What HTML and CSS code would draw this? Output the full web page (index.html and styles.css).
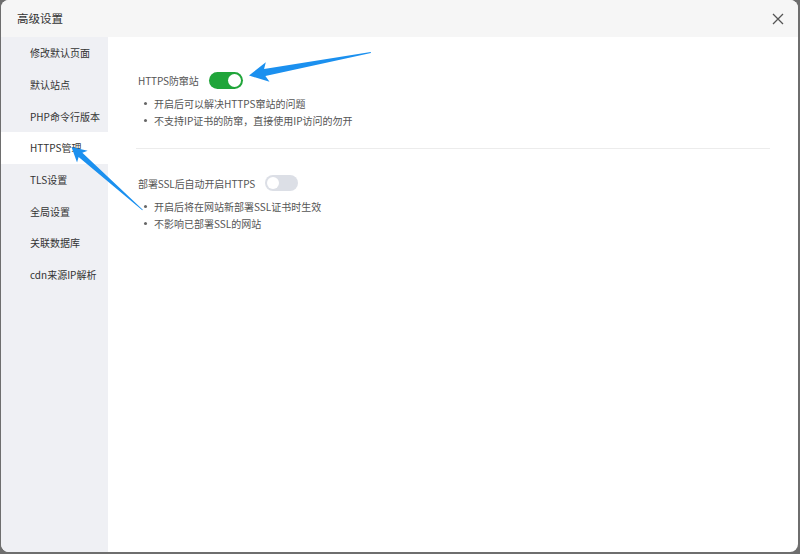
FILE: index.html
```html
<!DOCTYPE html>
<html lang="zh-CN">
<head>
<meta charset="utf-8">
<title>高级设置</title>
<link rel="stylesheet" href="styles.css">
</head>
<body>
<div class="dialog">
  <header class="dialog-head">
    <span class="dialog-title">高级设置</span>
    <button class="close" aria-label="关闭">
      <svg width="12" height="12" viewBox="0 0 12 12"><path d="M1 1L11 11M11 1L1 11" stroke="#555" stroke-width="1.3" fill="none"/></svg>
    </button>
  </header>
  <div class="dialog-body">
    <nav class="side">
      <a class="side-item">修改默认页面</a>
      <a class="side-item">默认站点</a>
      <a class="side-item">PHP命令行版本</a>
      <a class="side-item active">HTTPS管理</a>
      <a class="side-item">TLS设置</a>
      <a class="side-item">全局设置</a>
      <a class="side-item">关联数据库</a>
      <a class="side-item">cdn来源IP解析</a>
    </nav>
    <main class="content">
      <section class="opt">
        <div class="opt-row">
          <span class="opt-label">HTTPS防窜站</span>
          <span class="switch on"><span class="knob"></span></span>
        </div>
        <ul class="tips">
          <li>开启后可以解决HTTPS窜站的问题</li>
          <li>不支持IP证书的防窜，直接使用IP访问的勿开</li>
        </ul>
      </section>
      <hr class="sep">
      <section class="opt">
        <div class="opt-row">
          <span class="opt-label">部署SSL后自动开启HTTPS</span>
          <span class="switch off"><span class="knob"></span></span>
        </div>
        <ul class="tips tips-2">
          <li>开启后将在网站新部署SSL证书时生效</li>
          <li>不影响已部署SSL的网站</li>
        </ul>
      </section>
    </main>
  </div>
  <svg class="marks" width="800" height="554" viewBox="0 0 800 554">
    <!-- callout arrows; each drawn tip-at-origin, pointing back along -x -->
    <g transform="translate(249 75.5) rotate(-10.7)">
      <polygon points="0,0 19,-10 16,-3.6 124,-0.5 124,0.5 16,3.6 19,10" fill="#1b90ef"/>
    </g>
    <g transform="translate(71.5 147) rotate(41.6)">
      <polygon points="0,0 14.5,-8 12,-2.8 95,-0.4 95,0.4 12,2.8 14.5,8" fill="#1b90ef"/>
    </g>
  </svg>
</div>
</body>
</html>
```

FILE: styles.css
```css
* { box-sizing: border-box; }

html, body {
  margin: 0;
  height: 100%;
}

body {
  background: #6e6e6e;
  padding: 0 1px 2px 1px;
  font-family: "Noto Sans CJK SC", "Noto Sans", sans-serif;
  overflow: hidden;
}

.dialog {
  position: relative;
  width: 797px;
  height: 552px;
  background: #fff;
  border-radius: 8px;
  overflow: hidden;
  display: flex;
  flex-direction: column;
}

.dialog-head {
  height: 37px;
  flex: none;
  background: #f6f6f6;
  display: flex;
  align-items: center;
  justify-content: space-between;
  padding: 0 14px 0 16px;
}

.dialog-title {
  font-size: 11.5px;
  color: #333;
  line-height: 1;
  margin-top: 1px;
}

.close {
  border: 0;
  background: none;
  padding: 0;
  width: 12px;
  height: 12px;
  display: flex;
}

.dialog-body {
  flex: 1;
  display: flex;
}

.side {
  width: 107px;
  flex: none;
  background: #eff0f4;
  display: flex;
  flex-direction: column;
}

.side-item {
  height: 31.7px;
  display: flex;
  align-items: center;
  padding-left: 29px;
  font-size: 10px;
  color: #333;
}

.side-item.active {
  background: #fff;
}

.content {
  flex: 1;
  padding: 34px 30px 0 30px;
}

.opt-row {
  display: flex;
  align-items: center;
  height: 18px;
}

.opt-label {
  font-size: 10px;
  color: #555;
  margin-right: 10px;
  letter-spacing: -0.1px;
}

.switch {
  position: relative;
  display: inline-block;
  width: 34px;
  height: 17px;
  border-radius: 9px;
}

.switch.on { background: #20a53a; }
.switch.off { background: #dcdfe6; width: 33px; height: 16px; }

.knob {
  position: absolute;
  top: 2px;
  width: 13px;
  height: 13px;
  border-radius: 50%;
  background: #fff;
}

.switch.on .knob { right: 2px; }
.switch.off .knob { left: 2px; width: 12px; height: 12px; }

.tips {
  list-style: none;
  margin: 6px 0 0 0;
  padding: 0 0 0 16px;
}

.tips li {
  position: relative;
  font-size: 10px;
  line-height: 17px;
  color: #555;
}

.tips li::before {
  content: "";
  position: absolute;
  left: -10px;
  top: 7px;
  width: 3px;
  height: 3px;
  border-radius: 50%;
  background: #666;
}

.sep {
  border: 0;
  border-top: 1px solid #ececec;
  margin: 19px -2px 25px -2px;
}

.marks {
  position: absolute;
  left: -1px;
  top: 0;
  pointer-events: none;
}
```
